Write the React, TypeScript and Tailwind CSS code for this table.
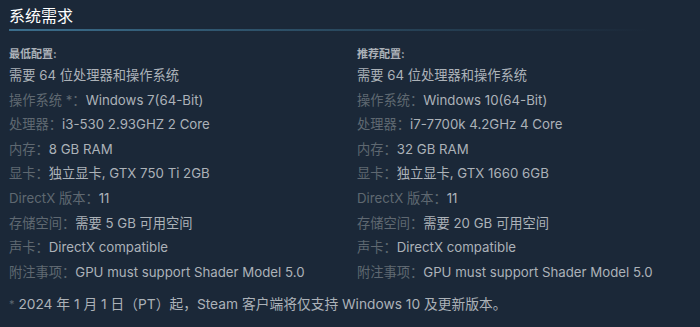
import React from 'react';

type Row = { label: string; value: string };

const minimum: Row[] = [
  { label: '操作系统 *：', value: 'Windows 7(64-Bit)' },
  { label: '处理器：', value: 'i3-530 2.93GHZ 2 Core' },
  { label: '内存：', value: '8 GB RAM' },
  { label: '显卡：', value: '独立显卡, GTX 750 Ti 2GB' },
  { label: 'DirectX 版本：', value: '11' },
  { label: '存储空间：', value: '需要 5 GB 可用空间' },
  { label: '声卡：', value: 'DirectX compatible' },
  { label: '附注事项：', value: 'GPU must support Shader Model 5.0' },
];

const recommended: Row[] = [
  { label: '操作系统：', value: 'Windows 10(64-Bit)' },
  { label: '处理器：', value: 'i7-7700k 4.2GHz 4 Core' },
  { label: '内存：', value: '32 GB RAM' },
  { label: '显卡：', value: '独立显卡, GTX 1660 6GB' },
  { label: 'DirectX 版本：', value: '11' },
  { label: '存储空间：', value: '需要 20 GB 可用空间' },
  { label: '声卡：', value: 'DirectX compatible' },
  { label: '附注事项：', value: 'GPU must support Shader Model 5.0' },
];

const Column: React.FC<{ title: string; rows: Row[] }> = ({ title, rows }) => (
  <div className="w-[348px] shrink-0">
    <div className="text-[11px] font-bold text-[#acb2b8] leading-[16px] mb-px">{title}</div>
    <div className="text-[13.25px] text-[#acb2b8] leading-[24.6px]">需要 64 位处理器和操作系统</div>
    {rows.map((r) => (
      <div key={r.label} className="text-[13.25px] leading-[24.6px] whitespace-nowrap">
        <span className="text-[#5f6871]">{r.label}</span>
        <span className="text-[#acb2b8]">{r.value}</span>
      </div>
    ))}
  </div>
);

export default function App() {
  return (
    <div className="w-[700px] h-[327px] bg-[#1b2838] overflow-hidden px-[9px] pt-[4px] font-['Inter','Noto_Sans_CJK_SC',sans-serif]">
      <div className="text-[16px] text-white leading-[24px]">系统需求</div>
      <div className="h-[2px] mt-px w-[640px] bg-gradient-to-r from-[#3b6e8c] via-[#2a4a60] to-transparent" />
      <div className="flex pt-[15px]">
        <Column title="最低配置:" rows={minimum} />
        <Column title="推荐配置:" rows={recommended} />
      </div>
      <div className="mt-[10px] text-[13.75px] text-[#acb2b8] leading-[20px] whitespace-nowrap">
        <span className="text-[#5f6871] text-[11px] align-top">*</span> 2024 年 1 月 1 日（PT）起，Steam 客户端将仅支持 Windows 10 及更新版本。
      </div>
    </div>
  );
}
